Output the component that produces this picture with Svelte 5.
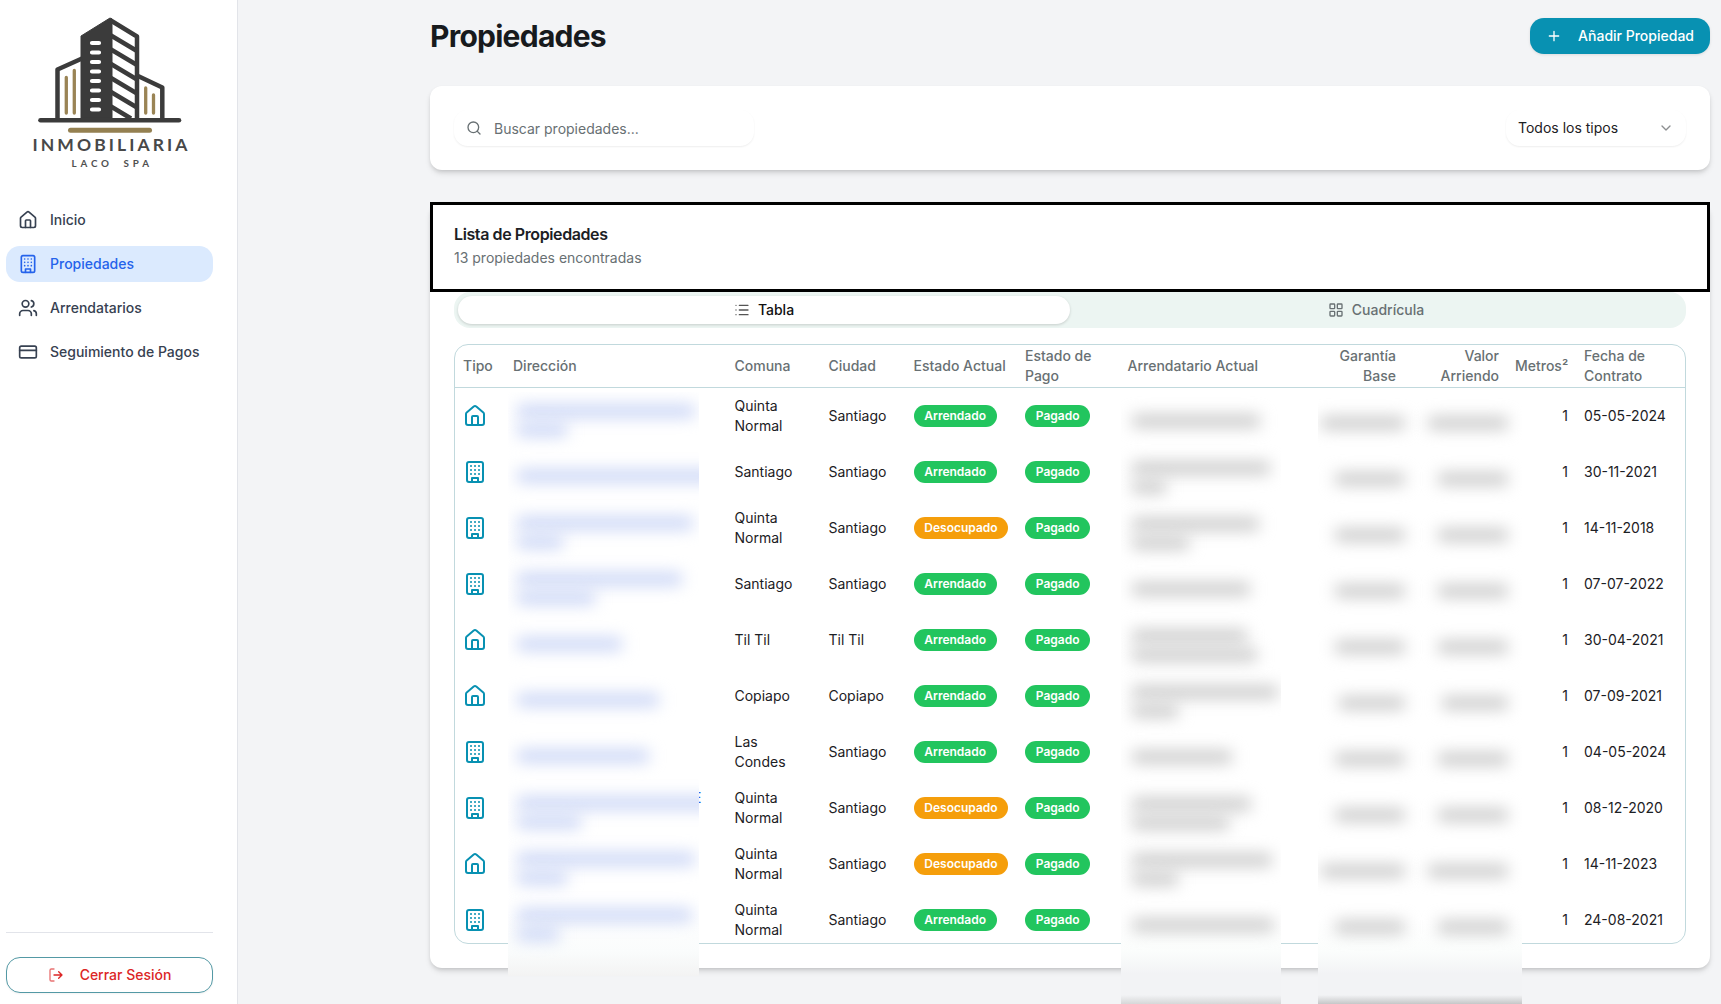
<script lang="ts">
  type Row = {
    kind: 'casa' | 'depto';
    comuna: string;
    ciudad: string;
    ocupado: boolean;
    fecha: string;
    dir: number[];
    arr: number[];
    money: number[];
    tail?: string;
  };

  const rows: Row[] = [
    { kind: 'casa', comuna: 'Quinta Normal', ciudad: 'Santiago', ocupado: true, fecha: '05-05-2024', dir: [178, 50], arr: [128], money: [84, 80] },
    { kind: 'depto', comuna: 'Santiago', ciudad: 'Santiago', ocupado: true, fecha: '30-11-2021', dir: [200], arr: [138, 34], money: [70, 70] },
    { kind: 'depto', comuna: 'Quinta Normal', ciudad: 'Santiago', ocupado: false, fecha: '14-11-2018', dir: [176, 46], arr: [127, 57], money: [70, 70] },
    { kind: 'depto', comuna: 'Santiago', ciudad: 'Santiago', ocupado: true, fecha: '07-07-2022', dir: [165, 78], arr: [118], money: [70, 70] },
    { kind: 'casa', comuna: 'Til Til', ciudad: 'Til Til', ocupado: true, fecha: '30-04-2021', dir: [105], arr: [115, 125], money: [70, 70] },
    { kind: 'casa', comuna: 'Copiapo', ciudad: 'Copiapo', ocupado: true, fecha: '07-09-2021', dir: [142], arr: [146, 46], money: [66, 66] },
    { kind: 'depto', comuna: 'Las Condes', ciudad: 'Santiago', ocupado: true, fecha: '04-05-2024', dir: [132], arr: [100], money: [70, 70] },
    { kind: 'depto', comuna: 'Quinta Normal', ciudad: 'Santiago', ocupado: false, fecha: '08-12-2020', dir: [200, 64], arr: [119, 97], money: [70, 70], tail: 'E' },
    { kind: 'casa', comuna: 'Quinta Normal', ciudad: 'Santiago', ocupado: false, fecha: '14-11-2023', dir: [178, 50], arr: [140, 46], money: [84, 80] },
    { kind: 'depto', comuna: 'Quinta Normal', ciudad: 'Santiago', ocupado: true, fecha: '24-08-2021', dir: [175, 42], arr: [142], money: [70, 70] }
  ];

  const nav = [
    { icon: 'casa', label: 'Inicio' },
    { icon: 'depto', label: 'Propiedades', active: true },
    { icon: 'users', label: 'Arrendatarios' },
    { icon: 'card', label: 'Seguimiento de Pagos' }
  ];
</script>

{#snippet icon(name: string, size: number)}
  <svg class="icon" width={size} height={size} viewBox="0 0 24 24" fill="none" stroke="currentColor" stroke-width="2" stroke-linecap="round" stroke-linejoin="round">
    {#if name === 'casa'}
      <path d="M15 21v-8a1 1 0 0 0-1-1h-4a1 1 0 0 0-1 1v8" />
      <path d="M3 10a2 2 0 0 1 .709-1.528l7-5.999a2 2 0 0 1 2.582 0l7 5.999A2 2 0 0 1 21 10v9a2 2 0 0 1-2 2H5a2 2 0 0 1-2-2z" />
    {:else if name === 'depto'}
      <rect x="4" y="2" width="16" height="20" rx="2" />
      <path d="M9 22v-4h6v4M8 6h.01M16 6h.01M12 6h.01M12 10h.01M12 14h.01M16 10h.01M16 14h.01M8 10h.01M8 14h.01" />
    {:else if name === 'users'}
      <path d="M16 21v-2a4 4 0 0 0-4-4H6a4 4 0 0 0-4 4v2" />
      <circle cx="9" cy="7" r="4" />
      <path d="M22 21v-2a4 4 0 0 0-3-3.87M16 3.13a4 4 0 0 1 0 7.75" />
    {:else if name === 'card'}
      <rect x="2" y="5" width="20" height="14" rx="2" />
      <path d="M2 10h20" />
    {:else if name === 'logout'}
      <path d="M9 21H5a2 2 0 0 1-2-2V5a2 2 0 0 1 2-2h4" opacity=".65" />
      <path d="M16 17l5-5-5-5M21 12H9" />
    {:else if name === 'plus'}
      <path d="M5 12h14M12 5v14" />
    {:else if name === 'search'}
      <circle cx="11" cy="11" r="8" />
      <path d="m21 21-4.3-4.3" />
    {:else if name === 'chevron'}
      <path d="m6 9 6 6 6-6" />
    {:else if name === 'list'}
      <path d="M3 12h.01M3 19h.01M3 5h.01M8 12h13M8 19h13M8 5h13" />
    {:else if name === 'grid'}
      <rect x="3" y="3" width="7" height="7" rx="1" />
      <rect x="14" y="3" width="7" height="7" rx="1" />
      <rect x="14" y="14" width="7" height="7" rx="1" />
      <rect x="3" y="14" width="7" height="7" rx="1" />
    {/if}
  </svg>
{/snippet}

<div class="page">
  <aside>
    <svg class="logo" width="220" height="190" viewBox="0 0 220 190" fill="none">
      <path d="M81 118V36l29-18 2 1v99z" fill="#3b3b3b" stroke="#3b3b3b" stroke-linejoin="round" />
      <g stroke="#3b3b3b" stroke-width="4.500" stroke-linejoin="round">
        <path d="M110 20l27 16.500V119" />
        <path d="M82 58.500L57.500 69.500V119M138 76l24.300 11.500V119" />
      </g>
      <path d="M111 35.500l26 15.500M111 49.500l26 15.500M111 64l26 15.500M111 78l26 15.500M111 92l26 15.500M111 106.500l20 12" stroke="#3b3b3b" stroke-width="4.500" />
      <path d="M92 43h7M92 52.500h7M92 62h7M92 71.500h7M92 81h7M92 90.500h7M92 100h7M92 109.500h7" stroke="#fff" stroke-width="4.200" stroke-linecap="round" />
      <path d="M66.300 77.500v35.500M74.300 70.500v42.500M145.700 88v25M153.500 95v18" stroke="#9a8455" stroke-width="3.300" stroke-linecap="round" />
      <path d="M40.500 120.300h138.500" stroke="#3b3b3b" stroke-width="4.600" stroke-linecap="round" />
      <path d="M70.500 130.200h79" stroke="#948051" stroke-width="5" stroke-linecap="round" />
      <text x="32.500" y="151" class="brand" textLength="155">INMOBILIARIA</text>
      <text x="71.500" y="167" class="sub" textLength="37.500">LACO</text>
      <text x="123.500" y="167" class="sub" textLength="25.500">SPA</text>
    </svg>
    <nav>
      {#each nav as n}
        <a class:active={n.active}>{@render icon(n.icon, 20)}<span>{n.label}</span></a>
      {/each}
    </nav>
    <div class="foot">
      <button class="logout">{@render icon('logout', 16)}Cerrar Sesión</button>
    </div>
  </aside>

  <main>
    <header>
      <h1>Propiedades</h1>
      <button class="add">{@render icon('plus', 16)}Añadir Propiedad</button>
    </header>

    <section class="card filters">
      <div class="field search">{@render icon('search', 16)}<span>Buscar propiedades...</span></div>
      <div class="field select"><span>Todos los tipos</span>{@render icon('chevron', 16)}</div>
    </section>

    <section class="card list">
      <div class="head">
        <h2>Lista de Propiedades</h2>
        <p>13 propiedades encontradas</p>
      </div>
      <div class="body">
        <div class="tabs">
          <div class="tab on">{@render icon('list', 16)}Tabla</div>
          <div class="tab">{@render icon('grid', 16)}Cuadrícula</div>
        </div>
        <div class="table">
          <div class="row th">
            <span>Tipo</span><span>Dirección</span><span>Comuna</span><span>Ciudad</span><span>Estado Actual</span><span>Estado de Pago</span><span>Arrendatario Actual</span><span class="r">Garantía Base</span><span class="r">Valor Arriendo</span><span class="r">Metros²</span><span>Fecha de Contrato</span>
          </div>
          {#each rows as r}
            <div class="row">
              <span class="kind">{@render icon(r.kind, 24)}</span>
              <span class="tail">{r.tail ?? ''}</span>
              <span>{r.comuna}</span>
              <span>{r.ciudad}</span>
              <span><b class="badge" class:free={!r.ocupado}>{r.ocupado ? 'Arrendado' : 'Desocupado'}</b></span>
              <span><b class="badge">Pagado</b></span>
              <span></span><span></span><span></span>
              <span class="r">1</span>
              <span class="date">{r.fecha}</span>
            </div>
          {/each}
        </div>
      </div>

      <div class="veil dir">
        {#each rows as r}
          <div class="cell">{#each r.dir as w}<i style:width="{w}px"></i>{/each}</div>
        {/each}
      </div>
      <div class="veil arr">
        {#each rows as r}
          <div class="cell">{#each r.arr as w}<i style:width="{w}px"></i>{/each}</div>
        {/each}
      </div>
      <div class="veil money">
        {#each rows as r}
          <div class="cell pair">{#each r.money as w}<div><i style:width="{w}px"></i></div>{/each}</div>
        {/each}
      </div>
    </section>
  </main>
</div>

<style>
  :global(body) { background: #f3f4f6; overflow: hidden; }
  .page {
    display: flex;
    height: 1004px;
    overflow: hidden;
    font: 14px/20px Inter, sans-serif;
    color: #1c2024;
  }
  .page :global(*) { box-sizing: border-box; }
  h1, h2, p { margin: 0; }
  button { font: inherit; border: 0; cursor: pointer; }
  .icon { flex: none; display: block; }

  aside {
    width: 238px;
    flex: none;
    display: flex;
    flex-direction: column;
    background: #fff;
    border-right: 1px solid #e2e4e9;
  }
  .logo { display: block; flex: none; }
  .brand { font: 700 17.500px Lato, sans-serif; fill: #484848; }
  .sub { font: 700 9.800px Lato, sans-serif; fill: #505050; }
  nav { display: flex; flex-direction: column; gap: 8px; padding: 12px 24px 0 6px; flex: 1; }
  nav a {
    display: flex;
    align-items: center;
    gap: 12px;
    height: 36px;
    padding: 0 12px;
    border-radius: 14px;
    color: #374151;
    font-weight: 500;
    white-space: nowrap;
  }
  nav a.active { background: #dbeafe; color: #2563eb; }
  .foot { margin: 0 24px 11px 6px; padding-top: 24px; border-top: 1px solid #e2e4ea; }
  .logout {
    display: flex;
    align-items: center;
    justify-content: center;
    gap: 16px;
    width: 100%;
    height: 36px;
    border: 1px solid #5399a5;
    border-radius: 14px;
    background: #fff;
    color: #dc2626;
    font-weight: 500;
    box-shadow: 0 1px 2px rgba(0, 0, 0, .05);
  }

  main { flex: 1; padding: 18px 11px 0 192px; }
  header { display: flex; align-items: center; justify-content: space-between; height: 36px; margin-bottom: 32px; }
  h1 { font-size: 30px; line-height: 36px; font-weight: 700; letter-spacing: -.75px; color: #171a1d; }
  .add {
    display: flex;
    align-items: center;
    gap: 16px;
    height: 36px;
    padding: 0 16px;
    border-radius: 14px;
    background: #0891b2;
    color: #fff;
    font-weight: 500;
    box-shadow: 0 1px 3px rgba(0, 0, 0, .1);
  }
  .card {
    background: #fff;
    border-radius: 12px;
    box-shadow: 0 4px 6px -1px rgba(0, 0, 0, .12), 0 2px 4px -1px rgba(0, 0, 0, .12);
  }
  .filters { display: flex; justify-content: space-between; height: 84px; padding: 24px; margin-bottom: 32px; }
  .field {
    display: flex;
    align-items: center;
    height: 36px;
    padding: 0 12px;
    border-radius: 14px;
    box-shadow: 0 1px 2px rgba(0, 0, 0, .07);
  }
  .search { width: 300px; gap: 12px; color: #687073; }
  .search span { padding-top: 2px; }
  .select { width: 180px; justify-content: space-between; }
  .select .icon, .select :global(svg) { opacity: .5; }

  .list { position: relative; height: 766px; }
  .head { height: 90px; padding: 19px 21px; border: 3px solid #000; background: #fff; }
  h2 { font-size: 16px; line-height: 20px; font-weight: 600; letter-spacing: -.4px; }
  .head p { margin-top: 4px; color: #687073; }
  .body { padding: 0 24px; }
  .tabs { display: flex; height: 36px; padding: 4px; border-radius: 16px; background: #ecf5f2; margin-bottom: 16px; }
  .tab {
    flex: 1;
    display: flex;
    align-items: center;
    justify-content: center;
    gap: 8px;
    border-radius: 14px;
    color: #687073;
    font-weight: 500;
  }
  .tab.on { background: #fff; color: #111; box-shadow: 0 1px 3px rgba(0, 0, 0, .16); }
  .tab.on .icon, .tab.on :global(svg) { color: #555; }

  .table { height: 600px; overflow: hidden; border: 1px solid #c1d9dd; border-radius: 14px; }
  .row {
    display: grid;
    grid-template-columns: 50px 221.5px 94px 85px 111.5px 102.5px 200px 84.5px 103px 69px 109px;
    align-items: center;
    height: 56px;
  }
  .row > span { padding: 0 8px; }
  .row .r { text-align: right; }
  .th { height: 43px; border-bottom: 1px solid #c1d9dd; color: #687073; font-weight: 500; }
  .kind { color: #0891b2; }
  .row > .tail { padding-left: 188px; padding-bottom: 20px; color: #2563eb; }
  .date { white-space: nowrap; }
  .badge {
    display: flex;
    align-items: center;
    width: max-content;
    height: 22px;
    padding: 0 10.800px;
    border-radius: 11px;
    background: #22c55e;
    color: #fff;
    font-size: 12px;
    font-weight: 600;
  }
  .badge.free { background: #f59e0b; }

  .veil {
    position: absolute;
    top: 190px;
    height: 612px;
    overflow: hidden;
    --ink: #c6c6c6;
    --edge: #d6d7d8;
    background: linear-gradient(#fff 530px, #fbfdfc 560px, #f2f3f5 582px, #f2f3f5 603px, var(--edge) 612px);
  }
  .cell { display: flex; flex-direction: column; justify-content: center; gap: 7px; height: 56px; padding: 8px 9px 0; }
  .cell:first-child { margin-top: -4px; }
  .cell i { display: block; flex: none; height: 12px; background: var(--ink); filter: blur(8px); border-radius: 4px; }
  .dir { left: 78px; width: 191px; height: 584px; --ink: #c6d2f5; background: linear-gradient(#fff 520px, #fafcfc 560px, #f3f3f3 584px); }
  .arr { left: 691px; width: 160px; }
  .arr .cell { padding: 10px 11px 0; }
  .money { left: 888px; width: 204px; --edge: #c6c7c8; }
  .money .pair { display: grid; grid-template-columns: 86px 103px; align-items: center; gap: 0; padding: 13px 0 0; }
  .pair div { display: flex; justify-content: flex-end; }
  .pair i { position: relative; right: 7px; }
</style>
